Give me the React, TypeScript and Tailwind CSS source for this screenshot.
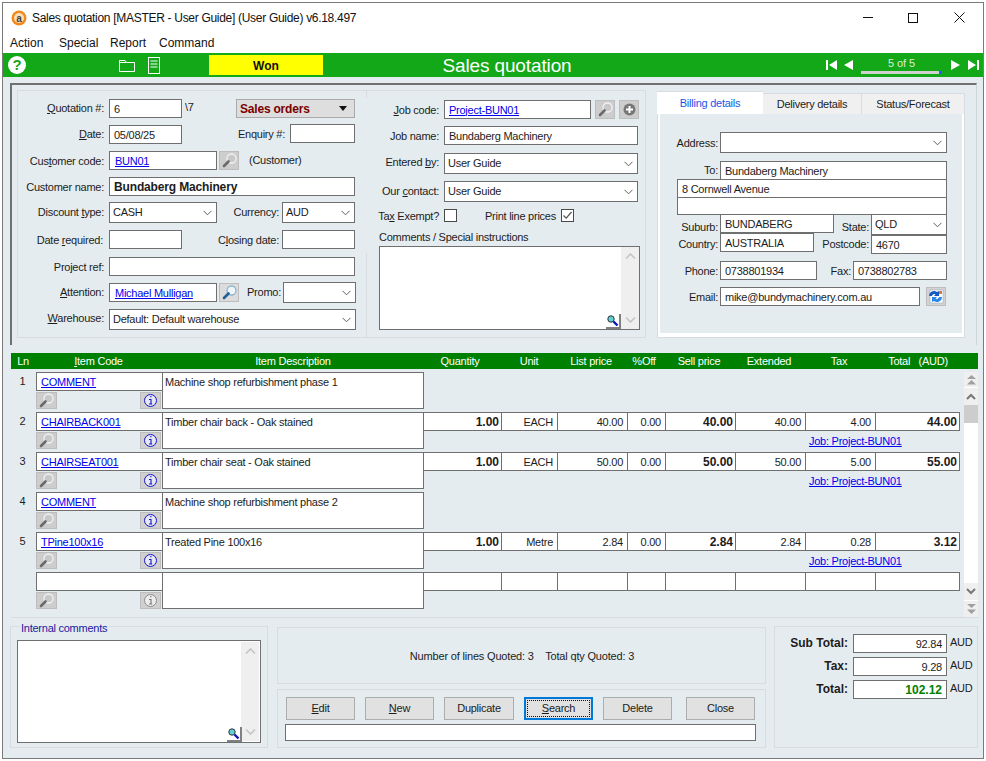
import React from 'react';

const Lens = ({ dim = false }: { dim?: boolean }) => (
  <svg width="17" height="15" viewBox="0 0 17 15" fill="none">
    <circle cx="10.500" cy="5.500" r="4.500" stroke={dim ? '#f2f2f2' : '#8fb4d0'} strokeWidth="1.3" fill={dim ? '#c8c8c8' : '#eef4f7'} />
    <path d="M7.500 8.500 L3 13" stroke={dim ? '#6a6a6a' : '#1d5f97'} strokeWidth="2.600" strokeLinecap="round" />
  </svg>
);

const LensBtn = ({ dim = true, className = '' }: { dim?: boolean; className?: string }) => (
  <div className={`w-[20px] h-[19px] border border-[#bdbdbd] flex items-center justify-center shrink-0 ${dim ? 'bg-[#cdcdcd]' : 'bg-[#dcdcdc]'} ${className}`}>
    <Lens dim={dim} />
  </div>
);

const InfoBtn = ({ dim = false }: { dim?: boolean }) => (
  <div className="w-[21px] h-[17px] bg-[#d0d0d0] border border-[#bdbdbd] flex items-center justify-center">
    <svg width="15" height="15" viewBox="0 0 15 15" fill="none">
      <circle cx="7.500" cy="7.500" r="6" stroke={dim ? '#8c8c8c' : '#1414c8'} strokeWidth="1" fill={dim ? '#ececec' : '#e8e8f4'} />
      <path d="M6 6.500h2v4.500M6 11h3.200M7.200 3.600h1.200" stroke={dim ? '#777' : '#1414c8'} strokeWidth="1.100" />
    </svg>
  </div>
);

const Chevron = () => (
  <svg width="9" height="6" viewBox="0 0 9 6" fill="none" className="shrink-0">
    <path d="M0.500 0.800 L4.500 4.800 L8.500 0.800" stroke="#606060" strokeWidth="1" />
  </svg>
);

const Field = ({ className = '', children, bold = false }: { className?: string; children?: React.ReactNode; bold?: boolean }) => (
  <div className={`border border-[#6f6f6f] bg-white flex items-center px-[4px] shrink-0 whitespace-nowrap overflow-hidden ${bold ? 'font-bold text-[12px] tracking-[-0.15px]' : ''} ${className}`}>
    {children}
  </div>
);

const Select = ({ className = '', children }: { className?: string; children?: React.ReactNode }) => (
  <div className={`border border-[#6f6f6f] bg-white flex items-center justify-between pl-[3px] pr-[4px] shrink-0 whitespace-nowrap ${className}`}>
    <span className="-mt-[2px]">{children}</span>
    <Chevron />
  </div>
);

const Link = ({ children }: { children: React.ReactNode }) => <span className="text-[#0000ee] underline">{children}</span>;

const Lbl = ({ className = '', children }: { className?: string; children: React.ReactNode }) => (
  <div className={`text-right shrink-0 whitespace-nowrap ${className}`}>{children}</div>
);

const LeftPanel = () => (
  <div className="relative w-[350px] h-[248px] border-l border-t border-b border-[#d6dcdf] shrink-0">
    <div className="absolute right-0 top-0 w-px h-[7px] bg-[#d6dcdf]" />
    <div className="absolute right-0 bottom-0 w-px h-[84px] bg-[#d6dcdf]" />
    <div className="flex items-center h-[19px] mt-[8px]">
      <Lbl className="w-[86px] -mt-[2px]"><u>Q</u>uotation #:</Lbl>
      <Field className="w-[73px] h-[19px] ml-[5px]">6</Field>
      <span className="ml-[3px] w-[51px] -mt-[4px]">\7</span>
      <div className="w-[119px] h-[19px] bg-[#dedede] border border-[#a9a9a9] flex items-center justify-between pl-[3px] pr-[7px] font-bold text-[12px] text-[#7a0000] tracking-[-0.2px]">
        Sales orders
        <svg width="8" height="5" viewBox="0 0 8 5"><path d="M0 0h8L4 5z" fill="#111" /></svg>
      </div>
    </div>
    <div className="flex items-center h-[19px] mt-[7px]">
      <Lbl className="w-[86px] -mt-[2px]"><u>D</u>ate:</Lbl>
      <Field className="w-[73px] h-[19px] ml-[5px]">05/08/25</Field>
      <Lbl className="w-[103px] -mt-[2px]">Enquiry #:</Lbl>
      <Field className="w-[65px] h-[19px] ml-[5px] -mt-[2px]" />
    </div>
    <div className="flex items-center h-[19px] mt-[7px]">
      <Lbl className="w-[86px]">Cus<u>t</u>omer code:</Lbl>
      <Field className="w-[108px] h-[19px] ml-[5px]"><span className="ml-[1px]"><Link>BUN01</Link></span></Field>
      <LensBtn className="ml-[2px]" />
      <span className="ml-[10px] -mt-[2px]">(Customer)</span>
    </div>
    <div className="flex items-center h-[19px] mt-[7px]">
      <Lbl className="w-[86px]">Customer name:</Lbl>
      <Field bold className="w-[246px] h-[19px] ml-[5px]">Bundaberg Machinery</Field>
    </div>
    <div className="flex items-center h-[21px] mt-[6px]">
      <Lbl className="w-[86px] -mt-[2px]">Discount <u>t</u>ype:</Lbl>
      <Select className="w-[108px] h-[21px] ml-[5px]">CASH</Select>
      <Lbl className="w-[62px] -mt-[2px]">Currency:</Lbl>
      <Select className="w-[73px] h-[21px] ml-[3px]">AUD</Select>
    </div>
    <div className="flex items-center h-[19px] mt-[7px]">
      <Lbl className="w-[85px] pr-0">Date <u>r</u>equired:</Lbl>
      <Field className="w-[73px] h-[19px] ml-[6px]" />
      <Lbl className="w-[97px]">C<u>l</u>osing date:</Lbl>
      <Field className="w-[73px] h-[19px] ml-[3px]" />
    </div>
    <div className="flex items-center h-[19px] mt-[8px]">
      <Lbl className="w-[86px]">Project ref:</Lbl>
      <Field className="w-[246px] h-[19px] ml-[5px]" />
    </div>
    <div className="flex items-center h-[19px] mt-[7px]">
      <Lbl className="w-[86px] -mt-[2px]"><u>A</u>ttention:</Lbl>
      <Field className="w-[108px] h-[19px] ml-[5px]"><span className="ml-[1px]"><Link>Michael Mulligan</Link></span></Field>
      <LensBtn dim={false} className="ml-[2px]" />
      <Lbl className="w-[42px] -mt-[2px]">Promo:</Lbl>
      <Select className="w-[73px] h-[21px] ml-[2px]"> </Select>
    </div>
    <div className="flex items-center h-[21px] mt-[7px]">
      <Lbl className="w-[86px] -mt-[4px]"><u>W</u>arehouse:</Lbl>
      <Select className="w-[247px] h-[21px] ml-[5px]">Default: Default warehouse</Select>
    </div>
  </div>
);

const Check = ({ on = false, className = '' }: { on?: boolean; className?: string }) => (
  <div className={`w-[13px] h-[13px] border border-[#4a4a4a] bg-white flex items-center justify-center shrink-0 ${className}`}>
    {on && (
      <svg width="11" height="11" viewBox="0 0 11 11" fill="none"><path d="M1.500 5.500 L4.200 8.200 L9.500 2" stroke="#555" strokeWidth="1.200" /></svg>
    )}
  </div>
);

const VBar = ({ className = '' }: { className?: string }) => (
  <div className={`w-[18px] bg-[#efefef] flex flex-col justify-between items-center py-[6px] shrink-0 ${className}`}>
    <svg width="11" height="6" viewBox="0 0 11 6" fill="none"><path d="M1 5.500 L5.500 1 L10 5.500" stroke="#c4c4c4" strokeWidth="1.600" /></svg>
    <svg width="11" height="6" viewBox="0 0 11 6" fill="none"><path d="M1 .5 L5.500 5 L10 .5" stroke="#c4c4c4" strokeWidth="1.600" /></svg>
  </div>
);

const ZoomTag = () => (
  <div className="absolute right-[18px] bottom-0 w-[15px] h-[15px] bg-white border-b-2 border-r-2 border-[#808080] flex items-center justify-center">
    <svg width="13" height="13" viewBox="0 0 13 13" fill="none">
      <circle cx="5" cy="5" r="3.200" fill="#5fd0d8" stroke="#333" strokeWidth="1" />
      <path d="M7.500 7.500 L11.500 11.500" stroke="#1010c0" strokeWidth="2.400" />
    </svg>
  </div>
);

const MiddlePanel = () => (
  <div className="w-[279px] h-[248px] border-t border-b border-r border-[#d6dcdf] shrink-0">
    <div className="flex items-center h-[19px] mt-[9px]">
      <Lbl className="w-[72px]"><u>J</u>ob code:</Lbl>
      <Field className="w-[147px] h-[19px] ml-[5px]"><Link>Project-BUN01</Link></Field>
      <LensBtn className="ml-[4px]" />
      <div className="w-[20px] h-[19px] ml-[4px] bg-[#cdcdcd] border border-[#bdbdbd] flex items-center justify-center">
        <svg width="15" height="15" viewBox="0 0 15 15"><circle cx="7.500" cy="7.500" r="6" fill="#777" /><path d="M7.500 4v7M4 7.500h7" stroke="#fff" strokeWidth="2" /></svg>
      </div>
    </div>
    <div className="flex items-center h-[19px] mt-[7px]">
      <Lbl className="w-[72px]">Job name:</Lbl>
      <Field className="w-[194px] h-[19px] ml-[5px]">Bundaberg Machinery</Field>
    </div>
    <div className="flex items-center h-[21px] mt-[8px]">
      <Lbl className="w-[72px] -mt-[4px]">Entered <u>b</u>y:</Lbl>
      <Select className="w-[194px] h-[21px] ml-[5px]">User Guide</Select>
    </div>
    <div className="flex items-center h-[21px] mt-[7px]">
      <Lbl className="w-[72px] -mt-[2px]">Our <u>c</u>ontact:</Lbl>
      <Select className="w-[194px] h-[21px] ml-[5px]">User Guide</Select>
    </div>
    <div className="flex items-center h-[13px] mt-[7px]">
      <Lbl className="w-[72px]">Ta<u>x</u> Exempt?</Lbl>
      <Check className="ml-[5px]" />
      <span className="ml-[28px] w-[76px] whitespace-nowrap">Print line prices</span>
      <Check on />
    </div>
    <div className="ml-[12px] mt-[8px] leading-[14px] whitespace-nowrap">Comments / Special instructions</div>
    <div className="relative ml-[12px] mt-[2px] w-[261px] h-[84px] border border-[#6f6f6f] bg-white flex justify-end">
      <VBar />
      <ZoomTag />
    </div>
  </div>
);

const Tab = ({ active = false, className = '', children }: { active?: boolean; className?: string; children: React.ReactNode }) => (
  <div className={`flex items-center justify-center whitespace-nowrap ${active ? 'h-[23px] bg-white text-[#1a55e8] border-t border-[#d6dcdf]' : 'h-[21px] mt-[2px] bg-[#f0f0f0] border-t border-r border-[#d6dcdf]'} ${className}`}>
    {children}
  </div>
);

const TabsPanel = () => (
  <div className="w-[308px] ml-[11px] shrink-0 mt-px">
    <div className="flex">
      <Tab active className="w-[106px]">Billing details</Tab>
      <Tab className="w-[99px]">Delivery details</Tab>
      <Tab className="w-[103px]">Status/Forecast</Tab>
    </div>
    <div className="h-[224px] bg-white border border-[#d6dcdf] border-t-0 p-[2px] pt-0">
      <div className="h-[219px] bg-[#e5ecf0] pt-[18px]">
        <div className="flex items-center h-[21px]">
          <Lbl className="w-[58px]">Address:</Lbl>
          <Select className="w-[227px] h-[21px] ml-[2px]"> </Select>
        </div>
        <div className="flex items-center h-[19px] mt-[8px]">
          <Lbl className="w-[58px] -mt-[2px]">To:</Lbl>
          <Field className="w-[227px] h-[19px] ml-[2px]">Bundaberg Machinery</Field>
        </div>
        <Field className="w-[270px] h-[19px] ml-[17px] -mt-px px-[3px]">8 Cornwell Avenue</Field>
        <Field className="w-[270px] h-[18px] ml-[17px] -mt-px" />
        <div className="flex h-[19px]">
          <Lbl className="w-[58px] pt-[5px]">Suburb:</Lbl>
          <Field className="w-[114px] h-[19px] ml-[2px] -mt-px px-[3px]">BUNDABERG</Field>
          <Lbl className="w-[33px] ml-[2px] pt-[5px]">State:</Lbl>
          <Select className="w-[76px] h-[21px] ml-[2px] -mt-px">QLD</Select>
        </div>
        <div className="flex h-[19px]">
          <Lbl className="w-[58px] pt-[3px]">Country:</Lbl>
          <Field className="w-[94px] h-[19px] ml-[2px] -mt-px px-[3px]">AUSTRALIA</Field>
          <Lbl className="w-[52px] ml-[3px] pt-[3px]">Postcode:</Lbl>
          <Field className="w-[76px] h-[19px] ml-[2px] mt-[1px]">4670</Field>
        </div>
        <div className="flex items-center h-[19px] mt-[8px]">
          <Lbl className="w-[58px]">Phone:</Lbl>
          <Field className="w-[97px] h-[19px] ml-[2px]">0738801934</Field>
          <Lbl className="w-[34px]">Fax:</Lbl>
          <Field className="w-[94px] h-[19px] ml-[2px]">0738802783</Field>
        </div>
        <div className="flex items-center h-[19px] mt-[7px]">
          <Lbl className="w-[58px]">Email:</Lbl>
          <Field className="w-[200px] h-[19px] ml-[2px]">mike@bundymachinery.com.au</Field>
          <div className="w-[20px] h-[19px] ml-[6px] bg-[#d4d4d4] border border-[#bdbdbd] flex items-center justify-center">
            <svg width="16" height="15" viewBox="0 0 16 15">
              <rect x="2" y="1" width="13" height="13" fill="#fff" stroke="#9ab" strokeWidth="0.600" />
              <rect x="11" y="2" width="3" height="3" fill="#d9763a" />
              <path d="M1 7a5 5 0 0 1 8-4l2-1v5H6l1.500-1.800A2.500 2.500 0 0 0 4 7z" fill="#1458c4" />
              <path d="M14 8a5 5 0 0 1-8 4l-2 1V8h5l-1.500 1.800A2.500 2.500 0 0 0 11 8z" fill="#2a86e8" />
            </svg>
          </div>
        </div>
      </div>
    </div>
  </div>
);

type Line = {
  ln: number;
  code: string;
  desc: string;
  nums?: { qty: string; unit: string; list: string; off: string; sell: string; ext: string; tax: string; total: string };
};

const lines: Line[] = [
  { ln: 1, code: 'COMMENT', desc: 'Machine shop refurbishment phase 1' },
  { ln: 2, code: 'CHAIRBACK001', desc: 'Timber chair back - Oak stained', nums: { qty: '1.00', unit: 'EACH', list: '40.00', off: '0.00', sell: '40.00', ext: '40.00', tax: '4.00', total: '44.00' } },
  { ln: 3, code: 'CHAIRSEAT001', desc: 'Timber chair seat - Oak stained', nums: { qty: '1.00', unit: 'EACH', list: '50.00', off: '0.00', sell: '50.00', ext: '50.00', tax: '5.00', total: '55.00' } },
  { ln: 4, code: 'COMMENT', desc: 'Machine shop refurbishment phase 2' },
  { ln: 5, code: 'TPine100x16', desc: 'Treated Pine 100x16', nums: { qty: '1.00', unit: 'Metre', list: '2.84', off: '0.00', sell: '2.84', ext: '2.84', tax: '0.28', total: '3.12' } },
];

const Cell = ({ className = '', children }: { className?: string; children?: React.ReactNode }) => (
  <div className={`h-[19px] flex items-center justify-end border-r border-[#6f6f6f] shrink-0 ${className}`}>{children}</div>
);

const NumRow = ({ n }: { n?: Line['nums'] }) => (
  <div className="flex h-[19px] w-[536px] bg-white border-y border-[#6f6f6f] items-center">
    <Cell className="w-[78px] pr-[2px] font-bold text-[12px] tracking-[0px]">{n?.qty}</Cell>
    <Cell className="w-[56px] pr-[4px]">{n?.unit}</Cell>
    <Cell className="w-[70px] pr-[4px]">{n?.list}</Cell>
    <Cell className="w-[38px] pr-[4px]">{n?.off}</Cell>
    <Cell className="w-[70px] pr-[2px] font-bold text-[12px] tracking-[0px]">{n?.sell}</Cell>
    <Cell className="w-[70px] pr-[4px]">{n?.ext}</Cell>
    <Cell className="w-[70px] pr-[4px]">{n?.tax}</Cell>
    <Cell className="w-[84px] pr-[2px] font-bold text-[12px] tracking-[0px]">{n?.total}</Cell>
  </div>
);

const GridRow = ({ line }: { line?: Line }) => (
  <div className="flex h-[40px]">
    <div className="w-[25px] text-center leading-[18px] pr-[2px] shrink-0">{line?.ln}</div>
    <div className="w-[126px] shrink-0">
      <Field className="w-[127px] h-[19px]"><Link>{line?.code}</Link></Field>
      <div className="flex justify-between w-[125px] mt-px">
        <div className="w-[21px] h-[17px] bg-[#cdcdcd] border border-[#bdbdbd] flex items-center justify-center"><Lens dim /></div>
        <InfoBtn dim={!line} />
      </div>
    </div>
    <div className="w-[262px] h-[37px] border border-[#6f6f6f] bg-white px-[2px] leading-[18px] whitespace-nowrap shrink-0">{line?.desc}</div>
    <div className="relative shrink-0">
      {(line?.nums || !line) && <NumRow n={line?.nums} />}
      {line?.nums && <div className="pl-[385px] leading-[20px] whitespace-nowrap"><Link>Job: Project-BUN01</Link></div>}
    </div>
  </div>
);

const Head = ({ className = '', children }: { className?: string; children: React.ReactNode }) => (
  <div className={`text-center shrink-0 whitespace-nowrap ${className}`}>{children}</div>
);

const LineGrid = () => (
  <div className="ml-[8px] w-[967px] mt-[8px] border-b border-[#d6dcdf]">
    <div className="h-[16px] bg-[#008000] text-white flex items-center">
      <Head className="w-[24px]">Ln</Head>
      <Head className="w-[127px]"><u>I</u>tem Code</Head>
      <Head className="w-[262px]">Item Description</Head>
      <Head className="w-[72px]">Quantity</Head>
      <Head className="w-[66px]">Unit</Head>
      <Head className="w-[58px]">List price</Head>
      <Head className="w-[48px]">%Off</Head>
      <Head className="w-[62px]">Sell price</Head>
      <Head className="w-[78px]">Extended</Head>
      <Head className="w-[62px]">Tax</Head>
      <Head className="w-[96px]">Total&nbsp;&nbsp;&nbsp;(AUD)</Head>
    </div>
    <div className="flex h-[248px]">
      <div className="w-[953px] pt-[3px] shrink-0">
        {lines.map((l) => <GridRow key={l.ln} line={l} />)}
        <GridRow />
      </div>
      <div className="w-[14px] ml-0 mt-[3px] flex flex-col bg-white">
        <div className="h-[15px] bg-[#efefef] flex items-center justify-center">
          <svg width="9" height="10" viewBox="0 0 9 10"><path d="M4.500 0 9 4H0zM4.500 5 9 9.500H0z" fill="#a0a0a0" /></svg>
        </div>
        <div className="h-[17px] mt-px bg-[#efefef] flex items-center justify-center">
          <svg width="10" height="7" viewBox="0 0 10 7" fill="none"><path d="M1 6 L5 2 L9 6" stroke="#777" strokeWidth="2" /></svg>
        </div>
        <div className="h-[18px] bg-[#cdcdcd]" />
        <div className="flex-1" />
        <div className="h-[17px] bg-[#efefef] flex items-center justify-center">
          <svg width="10" height="7" viewBox="0 0 10 7" fill="none"><path d="M1 1 L5 5 L9 1" stroke="#777" strokeWidth="2" /></svg>
        </div>
        <div className="h-[16px] mt-px bg-[#efefef] flex items-center justify-center">
          <svg width="9" height="10" viewBox="0 0 9 10"><path d="M0 0H9L4.500 4zM0 5.500H9L4.500 10z" fill="#a0a0a0" /></svg>
        </div>
      </div>
    </div>
  </div>
);

const ActBtn = ({ focus = false, className = '', children }: { focus?: boolean; className?: string; children: React.ReactNode }) => (
  focus ? (
    <div className={`h-[23px] border-2 border-[#0078d7] bg-[#e1e1e1] p-px shrink-0 ${className}`}>
      <div className="h-full border border-dotted border-[#111] flex items-center justify-center pb-px">{children}</div>
    </div>
  ) : (
    <div className={`h-[23px] border border-[#adadad] bg-[#e1e1e1] flex items-center justify-center pb-px shrink-0 ${className}`}>{children}</div>
  )
);

const TotalRow = ({ label, value, green = false, className = '' }: { label: string; value: string; green?: boolean; className?: string }) => (
  <div className={`flex items-center h-[19px] ${className}`}>
    <Lbl className="w-[73px] font-bold text-[12px] tracking-[0px] -mt-[2px]">{label}</Lbl>
    <Field className={`w-[94px] h-[19px] ml-[5px] justify-end ${green ? 'font-bold text-[12px] tracking-[0px] text-[#008000]' : ''}`}>{value}</Field>
    <span className="ml-[3px] -mt-[3px]">AUD</span>
  </div>
);

const Bottom = () => (
  <div className="flex ml-[7px] mt-[8px]">
    <div className="relative w-[258px] h-[122px] border border-[#d6dcdf] shrink-0 pl-[6px] pt-[13px]">
      <div className="absolute left-[9px] -top-[6px] px-px bg-[#e5ecf0] text-[#1a1aa0] leading-[14px]">Internal comments</div>
      <div className="relative w-[244px] h-[103px] border border-[#6f6f6f] bg-white flex justify-end">
        <VBar className="mr-px my-[1px]" />
        <ZoomTag />
      </div>
    </div>
    <div className="w-[489px] ml-[9px] shrink-0">
      <div className="h-[57px] mt-px border border-[#d6dcdf] flex items-center justify-center whitespace-nowrap pl-[1px] tracking-[-0.18px]">
        Number of lines Quoted: 3&nbsp;&nbsp;&nbsp;&nbsp;Total qty Quoted: 3
      </div>
      <div className="h-[59px] mt-[5px] border border-[#d6dcdf] pl-[8px] pt-[7px]">
        <div className="flex">
          <ActBtn className="w-[69px]"><span><u>E</u>dit</span></ActBtn>
          <ActBtn className="w-[69px] ml-[10px]"><span><u>N</u>ew</span></ActBtn>
          <ActBtn className="w-[70px] ml-[10px]">Duplicate</ActBtn>
          <ActBtn focus className="w-[69px] ml-[10px]"><span><u>S</u>earch</span></ActBtn>
          <ActBtn className="w-[69px] ml-[10px]">Delete</ActBtn>
          <ActBtn className="w-[69px] ml-[14px]">Close</ActBtn>
        </div>
        <div className="w-[471px] h-[17px] -ml-px mt-[4px] border border-[#6f6f6f] bg-white" />
      </div>
    </div>
    <div className="w-[204px] h-[122px] ml-[8px] border border-[#d6dcdf] shrink-0 pt-[7px]">
      <TotalRow label="Sub Total:" value="92.84" />
      <TotalRow label="Tax:" value="9.28" className="mt-[4px]" />
      <TotalRow label="Total:" value="102.12" green className="mt-[4px]" />
    </div>
  </div>
);

export default function App() {
  return (
    <div className="w-[986px] h-[761px] bg-white pl-[2px] pt-[2px] overflow-hidden font-['Liberation_Sans',Arial,sans-serif] text-[11px] tracking-[-0.25px] leading-[14px] text-[#1c1c1c]">
      <div className="w-[982px] h-[757px] border border-[#7a7a7a] flex flex-col bg-white">
        <div className="h-[29px] flex items-center shrink-0 text-[#111] text-[12px] tracking-[-0.3px]">
          <svg width="16" height="16" viewBox="0 0 16 16" className="ml-[8px]">
            <circle cx="8" cy="8" r="7.500" fill="#f08a1d" />
            <circle cx="8" cy="8" r="5" fill="#fde0b8" />
            <text x="8" y="11.500" textAnchor="middle" fontSize="10" fontWeight="700" fill="#444" fontFamily="Liberation Sans">a</text>
          </svg>
          <span className="ml-[5px] whitespace-nowrap">Sales quotation [MASTER - User Guide] (User Guide) v6.18.497</span>
          <div className="ml-auto flex items-center">
            <div className="w-[10px] h-px bg-[#111]" />
            <div className="w-[10px] h-[10px] border border-[#111] ml-[35px]" />
            <svg width="11" height="11" viewBox="0 0 11 11" className="ml-[36px] mr-[18px]"><path d="M.5.500 10.500 10.500M10.500.500.500 10.500" stroke="#111" strokeWidth="1" /></svg>
          </div>
        </div>
        <div className="h-[20px] flex items-center pl-[7px] pt-[2px] shrink-0 text-[#111] text-[12px] tracking-[0px]">
          <span className="w-[49px]">Action</span><span className="w-[51px]">Special</span><span className="w-[49px]">Report</span><span>Command</span>
        </div>
        <div className="h-[24px] mt-px bg-[#13a818] flex items-center shrink-0 text-white">
          <div className="w-[18px] h-[18px] rounded-full bg-white ml-[5px] flex items-center justify-center text-[#13a818] font-bold text-[15px] shrink-0">?</div>
          <svg width="16" height="13" viewBox="0 0 16 13" fill="none" className="ml-[93px] shrink-0"><path d="M.5 12.500V1.500H6L7.500 3.500H15.500V12.500ZM.5 3.500H7.500" stroke="#fff" /></svg>
          <svg width="12" height="17" viewBox="0 0 12 17" fill="none" className="ml-[13px] shrink-0"><rect x=".5" y=".5" width="11" height="16" stroke="#fff" /><path d="M2.500 4h7M2.500 7h7M2.500 10h7" stroke="#fff" /></svg>
          <div className="w-[114px] h-[20px] ml-[49px] pt-px bg-[#ffff00] text-[#111] font-bold text-[12px] tracking-[0px] flex items-center justify-center shrink-0">Won</div>
          <div className="w-[368px] pt-px text-center text-[19px] tracking-[-0.13px] whitespace-nowrap shrink-0">Sales quotation</div>
          <svg width="11" height="10" viewBox="0 0 11 10" className="ml-[135px] shrink-0"><path d="M0 0h2v10H0zM11 0v10L3 5z" fill="#fff" /></svg>
          <svg width="9" height="10" viewBox="0 0 9 10" className="ml-[7px] shrink-0"><path d="M9 0v10L0 5z" fill="#fff" /></svg>
          <div className="w-[81px] ml-[8px] shrink-0">
            <div className="text-center text-[#d8f0d8] leading-[13px] tracking-[-0.1px]">5 of 5</div>
            <div className="h-[3px] bg-[#d0d0d0] flex justify-end mt-[1px]"><div className="w-[3px] bg-[#1a60ff]" /></div>
          </div>
          <svg width="9" height="10" viewBox="0 0 9 10" className="ml-[9px] shrink-0"><path d="M0 0v10L9 5z" fill="#fff" /></svg>
          <svg width="11" height="10" viewBox="0 0 11 10" className="ml-[8px] shrink-0"><path d="M0 0v10L8 5zM9 0h2v10H9z" fill="#fff" /></svg>
        </div>
        <div className="flex-1 bg-[#e5ecf0]">
          <div className="ml-[7px] mt-[6px] w-[967px] h-[262px] border-t-2 border-l-2 border-[#707070] border-r border-r-[#cfd6da] pl-[5px] pt-[5px] flex">
            <LeftPanel />
            <MiddlePanel />
            <TabsPanel />
          </div>
          <LineGrid />
          <Bottom />
        </div>
      </div>
    </div>
  );
}
